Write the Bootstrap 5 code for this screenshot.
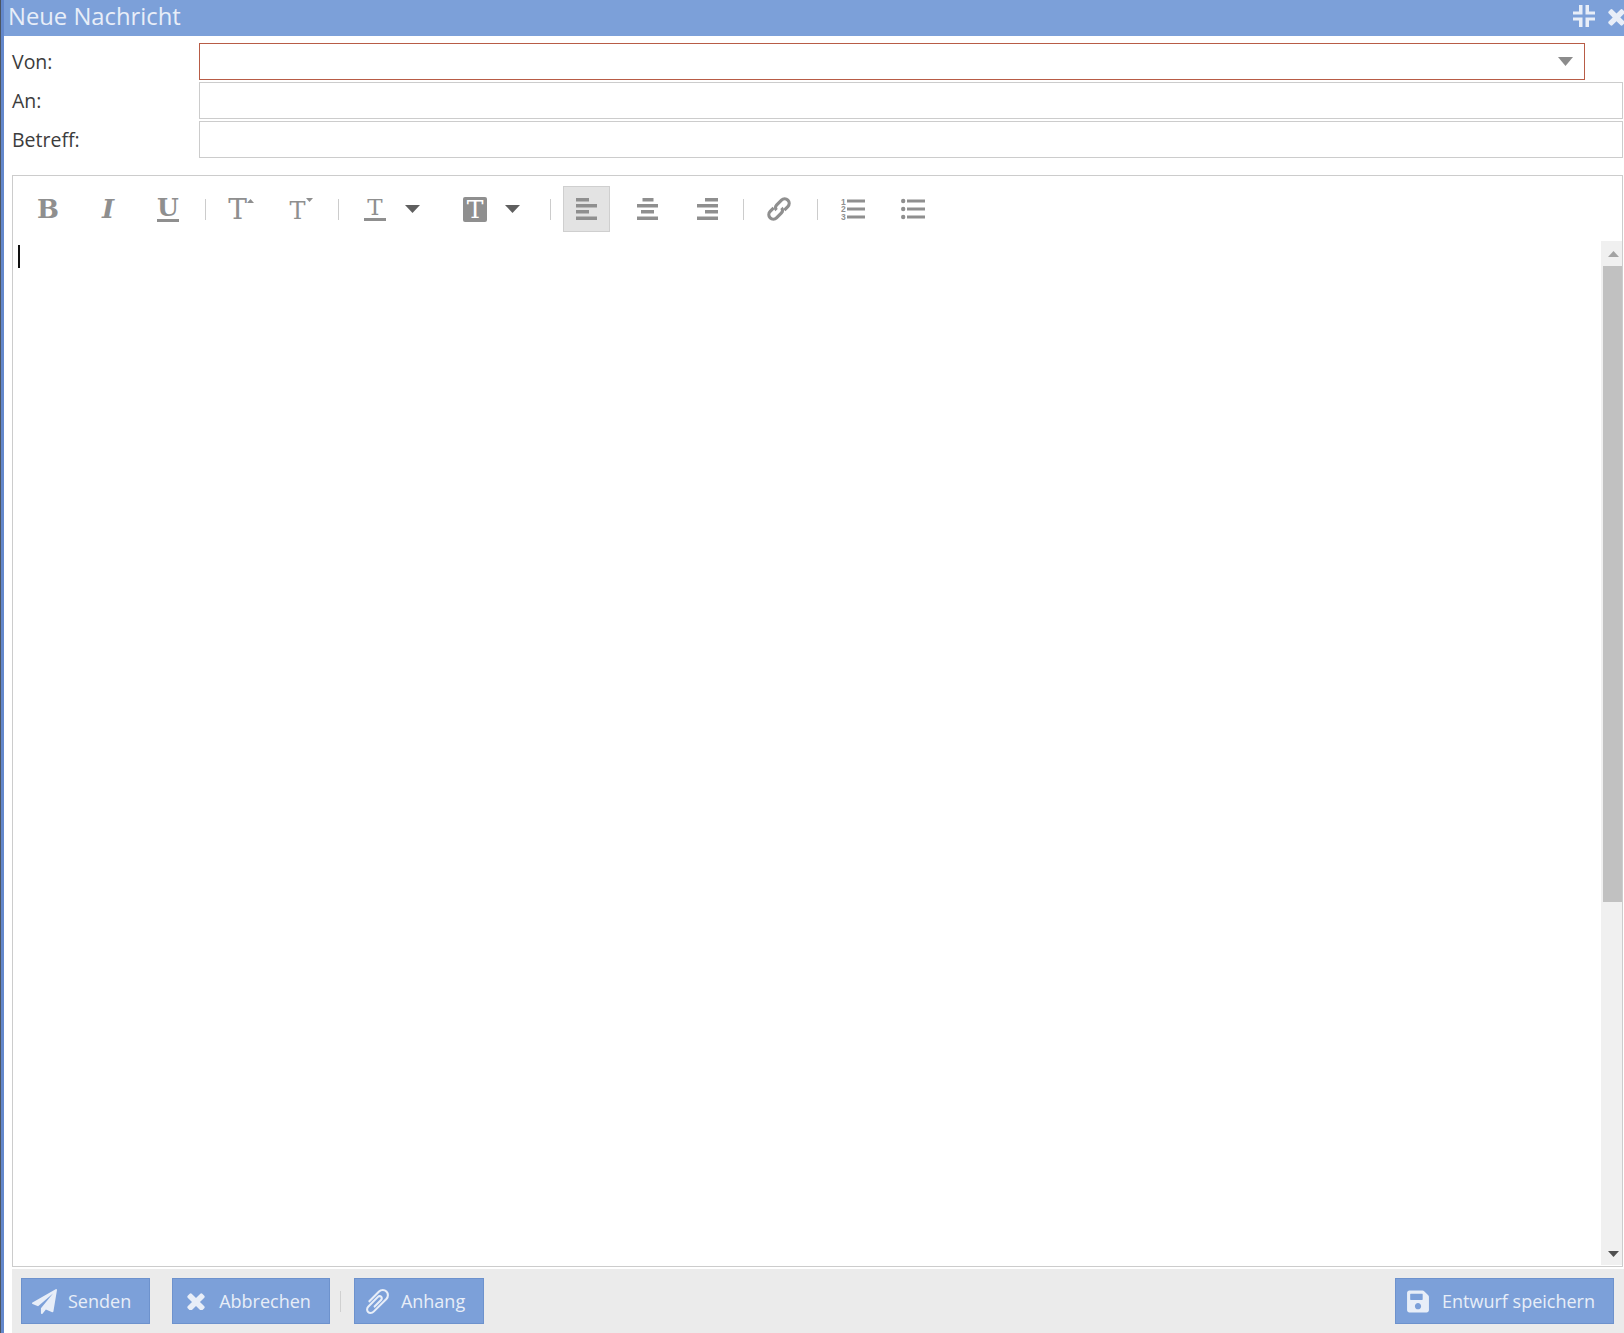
<!DOCTYPE html>
<html lang="de">
<head>
    <meta charset="UTF-8">
    <title>Neue Nachricht</title>
    <link rel="stylesheet" href="https://cdn.jsdelivr.net/npm/bootstrap@5.3.0/dist/css/bootstrap.min.css">
    <style>
        html, body { height: 100%; overflow: hidden; }
        body {
            background: #fff;
            font-family: "Open Sans", sans-serif;
            color: #3c3c3c;
            border-left: 1px solid #4c5560;
        }
        .msg-window {
            height: 1333px;
            border-left: 3px solid #6388cc;
            overflow: hidden;
        }
        .msg-window > * { flex: none; }
        .msg-title {
            height: 36px;
            background: #7ca0d9;
            color: #e8eef8;
            font-size: 23.8px;
            line-height: 33px;
            padding-left: 4px;
        }
        .win-icon { fill: #e8eef8; display: block; flex: none; }
        .win-shrink { margin: 5px 9px 0 0; }
        .win-close { margin: 4px -5px 0 0; }
        .msg-fields { padding: 7px 1px 0 8px; }
        .field-row { height: 37px; margin-bottom: 2px; }
        .field-label { width: 187px; font-size: 19.5px; line-height: 38px; }
        .field-box {
            height: 37px;
            border: 1px solid #ccc;
            background: #fff;
        }
        .field-box.field-error { border-color: #b85c46; margin-right: 38px; }
        .select-arrow { margin-right: 11px; }
        .editor-box {
            margin: 15px 1px 0 8px;
            height: 1092px;
            border: 1px solid #ccc;
        }
        .editor-tools { height: 65px; padding-left: 12px; padding-top: 10px; }
        .tool-btn {
            width: 46px;
            height: 46px;
            margin-right: 14px;
            color: #8f8f8f;
            flex: none;
        }
        .tool-btn.is-on { width: 47px; background: #e3e3e3; border: 1px solid #cfcfcf; }
        .tool-btn.tool-drop { width: 86px; justify-content: flex-start !important; }
        .tool-btn.end-13 { margin-right: 13px; }
        .tool-btn.end-15 { margin-right: 15px; }
        .tool-sep { width: 1px; height: 21px; background: #ccc; margin: 13px 12px 0 0; flex: none; }
        .drop-slot { width: 48px; }
        .drop-caret { margin-left: 6px; }
        .tool-letter {
            font-family: "DejaVu Serif", serif;
            line-height: 1;
            color: #8f8f8f;
        }
        .tool-letter.is-b { font-weight: 700; font-size: 26px; }
        .tool-letter.is-i { font-weight: 700; font-style: italic; font-size: 26px; }
        .tool-letter.is-u { font-weight: 700; font-size: 25px; border-bottom: 3px solid #8f8f8f; line-height: 22px; padding: 0; }
        .tool-letter.is-t { font-size: 28px; margin-top: 2px; }
        .tool-letter.is-ts { font-size: 24px; margin-top: 4px; }
        .tool-letter.is-tu { font-size: 23px; border-bottom: 3px solid #8f8f8f; line-height: 21px; padding: 0 3px; }
        .tool-letter.is-tb { font-size: 25px; background: #8f8f8f; color: #fff; width: 24px; height: 25px; line-height: 25px; text-align: center; border-radius: 2px; }
        .caret-up { margin-top: 13px; }
        .caret-down { margin-top: 12px; }
        .tool-icon { fill: #8f8f8f; display: block; }
        .editor-area { height: 1024px; }
        .editor-text { padding: 4px 5px; }
        .text-cursor { width: 2px; height: 23px; background: #111; }
        .editor-scroll { width: 21px; background: #f0f0f0; flex: none; }
        .scroll-btn { height: 25px; padding-left: 3px; }
        .scroll-btn.to-bottom { padding-top: 3px; }
        .scroll-thumb { width: 19px; height: 636px; background: #c1c1c1; margin-left: 2px; }
        .msg-foot {
            margin: 2px 0 0 8px;
            height: 64px;
            background: #ebebeb;
            padding: 9px 10px 9px 9px;
        }
        .foot-btn {
            height: 46px;
            background: #7ca0d9;
            border: 1px solid #6d92cd;
            border-radius: 0;
            color: #e8eef8;
            font-size: 18px;
            padding: 0 18px 0 10px;
            gap: 11px;
        }
        .foot-btn:hover { background: #7ca0d9; color: #e8eef8; }
        .foot-icon { fill: #e8eef8; display: block; flex: none; }
        .send-btn { margin-right: 22px; }
        .icon-cancel { margin: 0 3px 0 4px; }
        .icon-clip { margin: 0 1px; }
        .icon-save { margin: 0 2px 0 1px; }
        .foot-sep { width: 1px; height: 21px; background: #d0d0d0; margin: 0 13px 0 10px; }
    </style>
</head>
<body>
    <div class="msg-window d-flex flex-column">
        <div class="msg-title d-flex justify-content-between">
            <span>Neue Nachricht</span>
            <div class="d-flex align-items-start">
                <svg class="win-icon win-shrink" width="22" height="22" viewBox="0 0 22 22"><path d="M6 0h3.500v9.500H0v-3h6zM12.500 0H16v6.500h6v3h-9.500zM0 12.500h9.500V22H6v-6.500H0zM12.500 12.500H22v3h-6V22h-3.500z"/></svg>
                <svg class="win-icon win-close" width="25" height="25" viewBox="0 0 1792 1792"><path d="M1490 1322q0 40-28 68l-136 136q-28 28-68 28t-68-28l-294-294-294 294q-28 28-68 28t-68-28l-136-136q-28-28-28-68t28-68l294-294-294-294q-28-28-28-68t28-68l136-136q28-28 68-28t68 28l294 294 294-294q28-28 68-28t68 28l136 136q28 28 28 68t-28 68l-294 294 294 294q28 28 28 68z"/></svg>
            </div>
        </div>

        <div class="msg-fields">
            <div class="field-row d-flex">
                <div class="field-label">Von:</div>
                <div class="field-box field-error flex-grow-1 d-flex align-items-center justify-content-end">
                    <svg class="select-arrow" width="15" height="9" viewBox="0 0 15 9"><path d="M0 0h15L7.500 9z" fill="#8c8c8c"/></svg>
                </div>
            </div>
            <div class="field-row d-flex">
                <div class="field-label">An:</div>
                <div class="field-box flex-grow-1"></div>
            </div>
            <div class="field-row d-flex">
                <div class="field-label">Betreff:</div>
                <div class="field-box flex-grow-1"></div>
            </div>
        </div>

        <div class="editor-box">
            <div class="editor-tools d-flex align-items-start">
                <div class="tool-btn d-flex align-items-center justify-content-center"><span class="tool-letter is-b">B</span></div>
                <div class="tool-btn d-flex align-items-center justify-content-center"><span class="tool-letter is-i">I</span></div>
                <div class="tool-btn d-flex align-items-center justify-content-center"><span class="tool-letter is-u">U</span></div>
                <div class="tool-sep"></div>
                <div class="tool-btn d-flex align-items-center justify-content-center">
                    <span class="tool-letter is-t">T</span>
                    <svg class="align-self-start caret-up" width="7" height="4" viewBox="0 0 7 4"><path d="M0 4h7L3.500 0z" fill="#8f8f8f"/></svg>
                </div>
                <div class="tool-btn d-flex align-items-center justify-content-center">
                    <span class="tool-letter is-ts">T</span>
                    <svg class="align-self-start caret-down" width="7" height="4" viewBox="0 0 7 4"><path d="M0 0h7L3.500 4z" fill="#8f8f8f"/></svg>
                </div>
                <div class="tool-sep"></div>
                <div class="tool-btn tool-drop d-flex align-items-center">
                    <div class="drop-slot d-flex justify-content-center"><span class="tool-letter is-tu">T</span></div>
                    <svg class="drop-caret" width="15" height="8" viewBox="0 0 15 8"><path d="M0 0h15L7.500 8z" fill="#5f5f5f"/></svg>
                </div>
                <div class="tool-btn tool-drop end-13 d-flex align-items-center">
                    <div class="drop-slot d-flex justify-content-center"><span class="tool-letter is-tb">T</span></div>
                    <svg class="drop-caret" width="15" height="8" viewBox="0 0 15 8"><path d="M0 0h15L7.500 8z" fill="#5f5f5f"/></svg>
                </div>
                <div class="tool-sep"></div>
                <div class="tool-btn is-on d-flex align-items-center justify-content-center">
                    <svg class="tool-icon" width="21" height="22" viewBox="0 0 21 22"><path d="M0 0h13v3.500H0zM0 6h21v3.500H0zM0 12h13v3.500H0zM0 18.500h21V22H0z"/></svg>
                </div>
                <div class="tool-btn d-flex align-items-center justify-content-center">
                    <svg class="tool-icon" width="21" height="22" viewBox="0 0 21 22"><path d="M5.500 0h11v3.500h-11zM0 6h21v3.500H0zM4 12h13v3.500H4zM0 18.500h21V22H0z"/></svg>
                </div>
                <div class="tool-btn end-13 d-flex align-items-center justify-content-center">
                    <svg class="tool-icon" width="21" height="22" viewBox="0 0 21 22"><path d="M8 0h13v3.500H8zM0 6h21v3.500H0zM8 12h13v3.500H8zM0 18.500h21V22H0z"/></svg>
                </div>
                <div class="tool-sep"></div>
                <div class="tool-btn end-15 d-flex align-items-center justify-content-center">
                    <svg width="26" height="26" viewBox="0 0 26 26" fill="none" stroke="#8f8f8f" stroke-width="3.200"><g transform="rotate(-45 13 13)"><path d="M10 8.500H5a4.500 4.500 0 0 0 0 9h7a3.500 3.500 0 0 0 3.500-3.500"/><path d="M16 17.500h5a4.500 4.500 0 0 0 0-9h-7a3.500 3.500 0 0 0-3.500 3.500"/></g></svg>
                </div>
                <div class="tool-sep"></div>
                <div class="tool-btn d-flex align-items-center justify-content-center">
                    <svg class="tool-icon" width="24" height="22" viewBox="0 0 24 22"><path d="M6 1.500h18v3H6zM6 9.500h18v3H6zM6 17.500h18v3H6z"/><text x="0" y="6.500" font-size="8.500" font-family="Liberation Sans, sans-serif" font-weight="700">1</text><text x="0" y="14" font-size="8.500" font-family="Liberation Sans, sans-serif" font-weight="700">2</text><text x="0" y="21.500" font-size="8.500" font-family="Liberation Sans, sans-serif" font-weight="700">3</text></svg>
                </div>
                <div class="tool-btn d-flex align-items-center justify-content-center">
                    <svg class="tool-icon" width="24" height="22" viewBox="0 0 24 22"><circle cx="2.200" cy="3" r="2.200"/><circle cx="2.200" cy="11" r="2.200"/><circle cx="2.200" cy="19" r="2.200"/><path d="M6 1.500h18v3H6zM6 9.500h18v3H6zM6 17.500h18v3H6z"/></svg>
                </div>
            </div>
            <div class="editor-area d-flex">
                <div class="editor-text flex-grow-1"><div class="text-cursor"></div></div>
                <div class="editor-scroll d-flex flex-column">
                    <div class="scroll-btn d-flex align-items-center justify-content-center"><svg width="11" height="6" viewBox="0 0 11 6"><path d="M0 6h11L5.500 0z" fill="#a3a3a3"/></svg></div>
                    <div class="scroll-thumb"></div>
                    <div class="flex-grow-1"></div>
                    <div class="scroll-btn to-bottom d-flex align-items-center justify-content-center"><svg width="11" height="6" viewBox="0 0 11 6"><path d="M0 0h11L5.500 6z" fill="#505050"/></svg></div>
                </div>
            </div>
        </div>

        <div class="msg-foot d-flex align-items-center">
            <button type="button" class="btn foot-btn send-btn d-flex align-items-center">
                <svg class="foot-icon" width="25" height="25" viewBox="0 0 1792 1792"><path d="M1764 11q33 24 27 64l-256 1536q-5 29-32 45-14 8-31 8-11 0-24-5l-453-185-242 295q-18 23-49 23-13 0-22-4-19-7-30.500-23.500t-11.500-36.500v-349l864-1059-1069 925-395-162q-37-14-40-55-2-40 32-59l1664-960q15-9 32-9 20 0 36 11z"/></svg>Senden
            </button>
            <button type="button" class="btn foot-btn d-flex align-items-center">
                <svg class="foot-icon icon-cancel" width="18" height="18" viewBox="282 282 1228 1228"><path d="M1490 1322q0 40-28 68l-136 136q-28 28-68 28t-68-28l-294-294-294 294q-28 28-68 28t-68-28l-136-136q-28-28-28-68t28-68l294-294-294-294q-28-28-28-68t28-68l136-136q28-28 68-28t68 28l294 294 294-294q28-28 68-28t68 28l136 136q28 28 28 68t-28 68l-294 294 294 294q28 28 28 68z"/></svg>Abbrechen
            </button>
            <div class="foot-sep"></div>
            <button type="button" class="btn foot-btn d-flex align-items-center">
                <svg class="foot-icon icon-clip" width="23" height="25" viewBox="196 132 1400 1528"><path d="M1596 1385q0 117-79 196t-196 79q-135 0-235-100l-777-776q-113-115-113-271 0-159 110-270t269-111q158 0 273 113l605 606q10 10 10 22 0 16-30.500 46.500t-46.500 30.500q-13 0-23-10l-606-607q-79-77-181-77-106 0-179 75t-73 181q0 105 76 181l776 777q63 63 145 63 64 0 106-42t42-106q0-82-63-145l-581-581q-26-24-60-24-29 0-48 19t-19 48q0 32 25 59l410 410q10 10 10 22 0 16-31 47t-47 31q-12 0-22-10l-410-410q-63-61-63-149 0-82 57-139t139-57q88 0 149 63l581 581q100 98 100 235z" transform="matrix(-1 0 0 1 1792 0)"/></svg>Anhang
            </button>
            <button type="button" class="btn foot-btn d-flex align-items-center ms-auto">
                <svg class="foot-icon icon-save" width="22" height="25" viewBox="0 0 448 512"><path d="M433.941 129.941l-83.882-83.882A48 48 0 0 0 316.118 32H48C21.490 32 0 53.490 0 80v352c0 26.510 21.490 48 48 48h352c26.510 0 48-21.490 48-48V163.882a48 48 0 0 0-14.059-33.941zM224 416c-35.346 0-64-28.654-64-64 0-35.346 28.654-64 64-64s64 28.654 64 64c0 35.346-28.654 64-64 64zm96-304.520V212c0 6.627-5.373 12-12 12H76c-6.627 0-12-5.373-12-12V108c0-6.627 5.373-12 12-12h228.520c3.183 0 6.235 1.264 8.485 3.515l3.480 3.480A11.996 11.996 0 0 1 320 111.480z"/></svg>Entwurf speichern
            </button>
        </div>
    </div>
    <script src="https://cdn.jsdelivr.net/npm/bootstrap@5.3.0/dist/js/bootstrap.bundle.min.js"></script>
</body>
</html>
